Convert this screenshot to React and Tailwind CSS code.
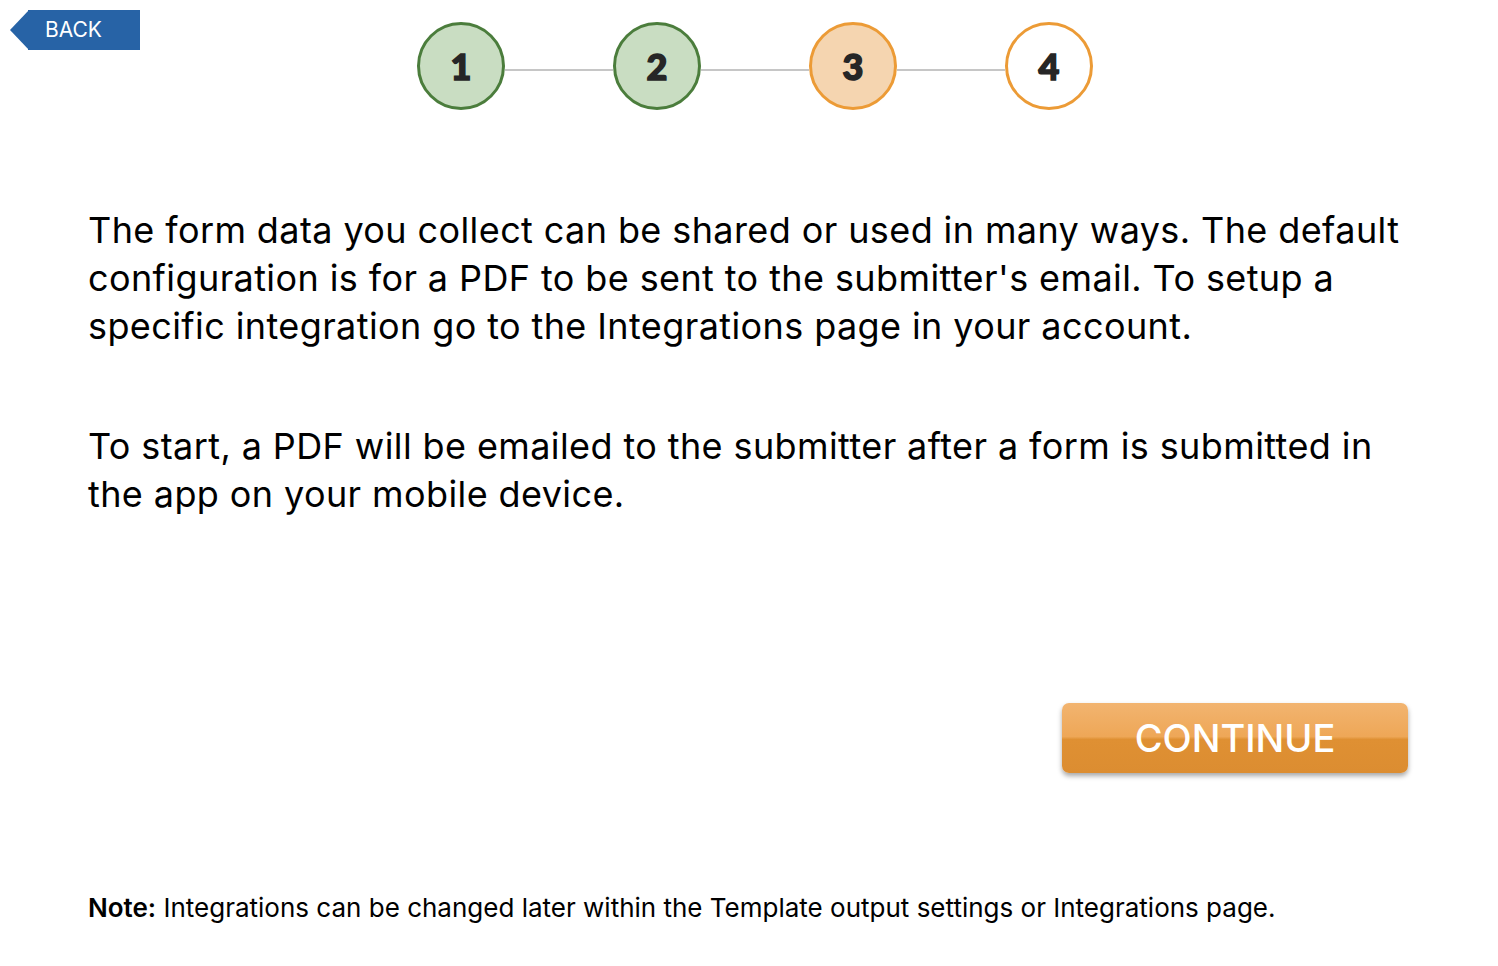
import React from 'react'

const steps = [
  { n: '1', state: 'done' },
  { n: '2', state: 'done' },
  { n: '3', state: 'current' },
  { n: '4', state: 'todo' },
]

const circleClass = {
  done: 'border-[#4b7d3c] bg-[#c9ddc2]',
  current: 'border-[#ec9b36] bg-[#f5d5b0]',
  todo: 'border-[#ec9b36] bg-white',
}

function BackButton() {
  return (
    <button type="button" className="relative flex h-10 w-[130px] items-center">
      <span className="absolute left-0 top-0 h-10 w-[19px] bg-[#2763a6] [clip-path:polygon(100%_0,100%_100%,0_50%)]" />
      <span className="ml-[18px] flex h-10 flex-1 items-center bg-[#2763a6] pl-[17px] text-[21px] text-white">BACK</span>
    </button>
  )
}

function Stepper() {
  return (
    <div className="flex items-center pt-3">
      {steps.map((s, i) => (
        <React.Fragment key={s.n}>
          {i > 0 && <div className="mt-2 h-[2px] w-[108px] bg-[#c6c6c6]" />}
          <div
            className={`flex h-[88px] w-[88px] items-center justify-center rounded-full border-[3px] font-['Lato',sans-serif] text-[36px] font-black text-[#262626] [-webkit-text-stroke:1.5px_#262626] ${circleClass[s.state]}`}
          >
            {s.n}
          </div>
        </React.Fragment>
      ))}
    </div>
  )
}

export default function App() {
  return (
    <div className="min-h-[966px] w-full bg-white font-['Inter','Liberation_Sans',sans-serif] text-black">
      <div className="flex items-start pl-[10px] pt-[10px]">
        <BackButton />
        <div className="ml-[277px]">
          <Stepper />
        </div>
      </div>

      <div className="pl-[88px] pr-[90px] pt-[96px]">
        <p className="text-[36px] leading-[48px] tracking-[0.4px]">
          The form data you collect can be shared or used in many ways. The default configuration is for a PDF to be sent to the submitter's email. To setup a specific integration go to the Integrations page in your account.
        </p>
        <p className="mt-[72px] text-[36px] leading-[48px] tracking-[0.4px]">
          To start, a PDF will be emailed to the submitter after a form is submitted in the app on your mobile device.
        </p>

        <div className="mt-[185px] flex justify-end">
          <button
            type="button"
            className="flex h-[70px] w-[346px] items-center justify-center rounded-[7px] bg-[linear-gradient(to_bottom,#f2b470_0%,#eea757_48%,#df9033_52%,#dc8d31_100%)] text-[38px] font-medium text-white shadow-[0_3px_5px_rgba(0,0,0,0.35)]"
          >
            CONTINUE
          </button>
        </div>

        <p className="mt-[118px] text-[26px] leading-[34px]">
          <span className="font-semibold">Note:</span> Integrations can be changed later within the Template output settings or Integrations page.
        </p>
      </div>
    </div>
  )
}
